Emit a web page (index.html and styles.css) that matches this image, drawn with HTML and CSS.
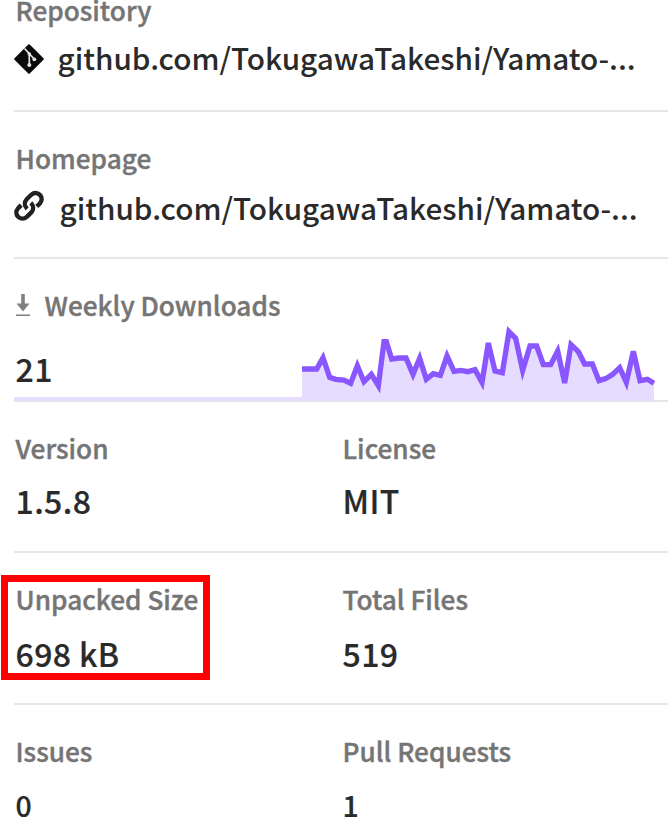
FILE: index.html
```html
<!DOCTYPE html>
<html lang="en">
<head>
<meta charset="utf-8">
<title>Package details</title>
<link rel="stylesheet" href="styles.css">
</head>
<body>
<main class="sidebar">
  <section class="row repository">
    <h3 class="label">Repository</h3>
    <a class="link">
      <svg class="icon" viewBox="0 0 30 30"><path d="M15 1.2 28.8 15 15 28.8 1.2 15Z" fill="#0b0b0b" stroke="#0b0b0b" stroke-width="2" stroke-linejoin="round"/><path d="M10.5 4.5 15.3 9.6V21.5M15.5 10l4.8 5" fill="none" stroke="#e4e4e4" stroke-width="1.7"/><circle cx="15.3" cy="10" r="1.800" fill="#e4e4e4"/><circle cx="15.3" cy="21" r="2" fill="#e4e4e4"/><circle cx="20.3" cy="15.3" r="1.900" fill="#e4e4e4"/></svg>
      <span>github.com/TokugawaTakeshi/Yamato-...</span>
    </a>
  </section>
  <section class="row homepage">
    <h3 class="label">Homepage</h3>
    <a class="link">
      <svg class="icon" viewBox="0 0 30 30"><g fill="none" stroke="#222" stroke-width="4.400"><path d="M13.2 17.8C10.2 15 10.1 11 12.700 8.200L17.200 3.800C20 1.400 23.500 1.500 25.900 3.900C28.300 6.400 28.200 9.800 25.800 12.500L22.800 15.500"/><path d="M16.800 11.800C19.800 14.600 19.900 18.600 17.300 21.400L12.800 25.800C10 28.200 6.500 28.100 4.100 25.700C1.700 23.200 1.800 19.800 4.200 17.100L7.200 14.100"/></g></svg>
      <span>github.com/TokugawaTakeshi/Yamato-...</span>
    </a>
  </section>
  <section class="row downloads">
    <h3 class="label"><svg class="down" viewBox="0 0 14 23"><path d="M5.200 0H8.800V9.500H13.500L7 17.500.5 9.500H5.200ZM0 20.400H14V22H0Z" fill="#808080"/></svg>Weekly Downloads</h3>
    <div class="trend">
      <p class="value">21</p>
      <svg class="chart" viewBox="21 0 1062 243">
        <path fill="#e5dcff" d="M21 147H65L84 113 104 172 122 178 147 180 167 190 187 137 207 185 229 163 250 197 267 65H274L290 117 312 114 333 114 354 163 374 115 394 178 415 161 436 166 456 108 477 154 498 151 519 155 540 149 561 187 580 69 600 153 622 158 642 35 662 55 683 151 705 78 725 78 745 134 767 134 788 93 809 189 828 74 850 95 869 132 892 132 912 182 932 176 953 163 974 143 994 187 1015 94 1035 182 1057 178 1077 190V243H21Z"/>
        <path class="line" d="M21 147H65L84 113 104 172 122 178 147 180 167 190 187 137 207 185 229 163 250 197 267 65H274L290 117 312 114 333 114 354 163 374 115 394 178 415 161 436 166 456 108 477 154 498 151 519 155 540 149 561 187 580 69 600 153 622 158 642 35 662 55 683 151 705 78 725 78 745 134 767 134 788 93 809 189 828 74 850 95 869 132 892 132 912 182 932 176 953 163 974 143 994 187 1015 94 1035 182 1057 178 1077 190"/>
      </svg>
    </div>
  </section>
  <section class="row pair release">
    <div><h3 class="label">Version</h3><p class="value">1.5.8</p></div>
    <div><h3 class="label">License</h3><p class="value">MIT</p></div>
  </section>
  <section class="row pair size">
    <div><h3 class="label">Unpacked Size</h3><p class="value">698 kB</p></div>
    <div><h3 class="label">Total Files</h3><p class="value">519</p></div>
  </section>
  <section class="row pair activity">
    <div><h3 class="label">Issues</h3><p class="value">0</p></div>
    <div><h3 class="label">Pull Requests</h3><p class="value">1</p></div>
  </section>
  <div class="highlight"></div>
</main>
</body>
</html>
```
FILE: styles.css
```css
* { box-sizing: border-box; margin: 0; padding: 0; }
body {
  background: #fff;
  color: #2a2a2a;
  font-family: "Noto Sans CJK SC", "Noto Sans", sans-serif;
  font-weight: 500;
  overflow: hidden;
}
.sidebar { position: relative; display: flow-root; height: 819px; padding-left: 14px; overflow: hidden; }
.row { display: flow-root; border-bottom: 2px solid #e6e6e6; padding-top: 31px; }
.label {
  color: #757575;
  font-size: 26.2px;
  font-weight: 500;
  line-height: 30px;
  padding-left: 1.5px;
  white-space: nowrap;
  -webkit-text-stroke: 0.4px #757575;
}
.link {
  display: flex;
  align-items: flex-start;
  font-size: 29.7px;
  line-height: 40px;
  white-space: nowrap;
}
.icon { width: 30px; height: 30px; flex: none; overflow: visible; }
.value {
  font-size: 32px;
  line-height: 40px;
  padding-left: 1.5px;
  letter-spacing: 0.4px;
  -webkit-text-stroke: 0.2px #2a2a2a;
}

.repository { height: 112px; padding-top: 0; }
.repository .label { margin-top: -5px; }
.repository .link { margin-top: 13px; gap: 13.5px; }
.repository .icon { margin-top: 6px; }
.homepage { height: 147px; }
.homepage .link { margin-top: 15px; gap: 15.5px; }
.homepage .icon { margin-top: 3px; }

.downloads { height: 143px; }
.downloads .label { display: flex; }
.down { width: 14px; height: 23px; margin: 4px 15px 0 0; flex: none; }
.trend { display: flex; height: 81px; }
.trend .value { width: 288px; padding-top: 28px; border-bottom: 4px solid #e5dcff; }
.chart { width: 354px; height: 81px; overflow: visible; }
.line { fill: none; stroke: #8956ff; stroke-width: 16; }

.pair { display: grid; grid-template-columns: 327px 1fr; }
.release { height: 151px; }
.release .value { margin-top: 17px; }
.size { height: 152px; }
.size .value { margin-top: 19px; }
.activity { height: 130px; border-bottom: 0; }
.activity .value { margin-top: 19px; font-size: 28.5px; }

.highlight {
  position: absolute;
  left: 1px;
  top: 575px;
  width: 209px;
  height: 105px;
  border: 7px solid #f00;
}
```
